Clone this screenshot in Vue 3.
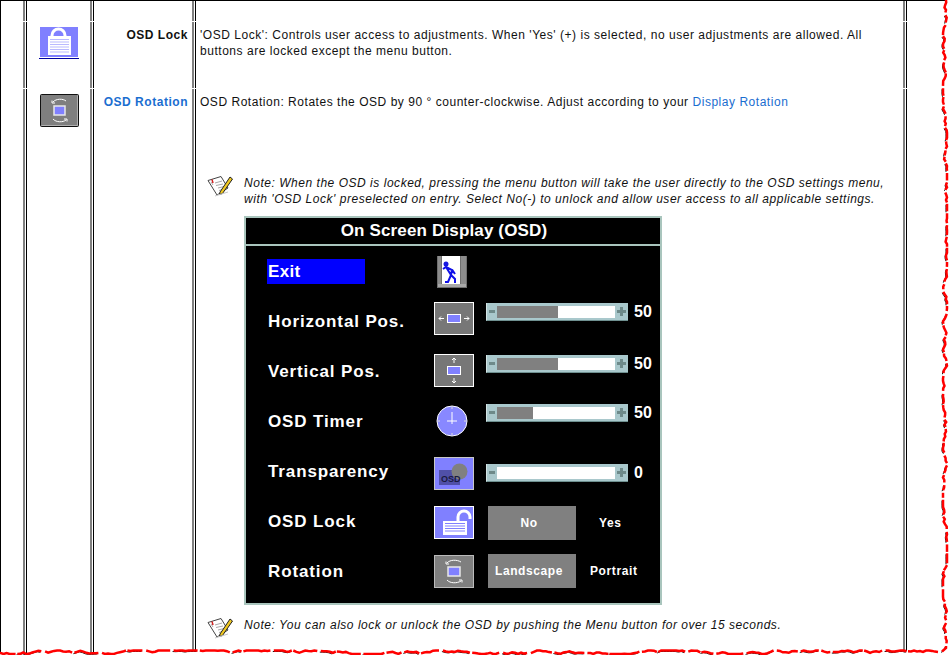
<script setup>
const rows = [
  { label: 'Exit', icon: 'exit', top: 10, active: true },
  { label: 'Horizontal Pos.', icon: 'hpos', top: 6, sliderTop: 7, fill: 61, value: 50 },
  { label: 'Vertical Pos.', icon: 'vpos', top: 8, sliderTop: 9, fill: 61, value: 50 },
  { label: 'OSD Timer', icon: 'clock', top: 9, sliderTop: 8, fill: 36, value: 50 },
  { label: 'Transparency', icon: 'trans', top: 11, sliderTop: 18, fill: 0, value: 0 },
  { label: 'OSD Lock', icon: 'unlock', top: 10, optTop: 10, box: 'No', other: 'Yes', gap: 23 },
  { label: 'Rotation', icon: 'rot', top: 9, optTop: 8, box: 'Landscape', other: 'Portrait', gap: 14 }
]

let seed = 4711
const rnd = (a, b) => {
  seed = (seed * 16807) % 2147483647
  return a + (seed % 1000) / 1000 * (b - a)
}

const redSegs = []
const blackSegs = []
const addSeg = (pts) => {
  const d = 'M' + pts.map((p) => p[0].toFixed(1) + ' ' + p[1].toFixed(1)).join('L')
  redSegs.push(d)
  if (redSegs.length % 2 === 0) blackSegs.push(d)
}

const outline = []
let x = 946
let y = 0
while (y < 642) {
  const len = rnd(4, 13)
  const seg = []
  const end = y + len
  while (y < end) {
    seg.push([x, y])
    y += 2.5
    x = Math.min(947, Math.max(943, x + rnd(-1.8, 1.8)))
  }
  seg.push([x, y])
  outline.push(...seg)
  addSeg(seg)
  y += rnd(1, 3)
}
outline.push([946, 648], [942, 652])
addSeg([[946, 646], [946, 648], [942, 651.5]])
x = 938
y = 652
while (x > 0) {
  const len = rnd(8, 30)
  const seg = []
  const end = x - len
  while (x > end) {
    seg.push([x, y])
    x -= 3
    y = Math.min(654, Math.max(650.5, y + rnd(-1.6, 1.6)))
  }
  seg.push([x, y])
  outline.push(...seg)
  addSeg(seg)
  x -= rnd(1, 4)
}
const mask =
  'M949 0L' + outline.map((p) => p[0].toFixed(1) + ' ' + p[1].toFixed(1)).join('L') + 'L0 655L949 655Z'
</script>

<template>
  <div class="page">
    <div class="table">
      <div class="cell"></div><div class="cell"></div><div class="cell"></div><div class="cell"></div><div class="cell"></div>

      <div class="cell"></div>
      <div class="cell icon-cell">
        <svg class="lock-icon" width="40" height="33" viewBox="0 0 40 33">
          <rect x="1" y="0" width="38" height="30" fill="#8080ff" />
          <path d="M13 10V8.500a6.500 6.500 0 0 1 13 0V10" fill="none" stroke="#fff" stroke-width="3" />
          <rect x="9" y="9" width="23" height="19" fill="#fff" />
          <path d="M11 12.500H30M11 15H30M11 17.500H30M11 20H30M11 22.500H30M11 25H30" stroke="#b9b9ff" />
          <rect x="0" y="31" width="40" height="1" fill="#0000a0" />
        </svg>
      </div>
      <div class="cell label-cell">OSD Lock</div>
      <div class="cell text-cell">
        'OSD Lock': Controls user access to adjustments. When 'Yes' (+) is selected, no user adjustments are allowed. All<br />buttons are locked except the menu button.
      </div>
      <div class="cell"></div>

      <div class="cell"></div>
      <div class="cell icon-cell">
        <svg width="39" height="33" viewBox="0 0 39 33">
          <rect x="0.500" y="0.500" width="38" height="32" rx="1" fill="#7f7f7f" stroke="#111" />
          <path d="M1.500 31.500H37.500V1.500" fill="none" stroke="#b0b0b0" />
          <rect x="14" y="12" width="11" height="9" fill="#8080ff" stroke="#e8e8e8" stroke-width="1.500" />
          <path d="M13 8C16 4.500 23 4.500 26 7M12 6.500V9H15M13 25C16 28.500 23 28.500 26 26M27 27.500V25H24" fill="none" stroke="#fff" />
        </svg>
      </div>
      <div class="cell label-cell link">OSD Rotation</div>
      <div class="cell text-cell">
        <div>OSD Rotation: Rotates the OSD by 90 ° counter-clockwise. Adjust according to your <span class="link-text">Display Rotation</span></div>

        <div class="note first-note">
          <svg class="note-icon" width="26" height="22" viewBox="0 0 26 22">
            <path d="M1 5.500L14 1.500L21 13L10 20Z" fill="#fff" stroke="#444" />
            <path d="M4 7L6 10M8 8L15 6M9 10.500L16 9M11 13L17 11.500M12 15.500L17 14" stroke="#a8a8a8" />
            <path d="M5 4.500L6 8" stroke="#d02020" stroke-width="1.500" />
            <path d="M13 17L23 2L25.500 4L15.500 18.500L12.500 19.500Z" fill="#f0c820" stroke="#222" />
            <path d="M8 21L21 17" stroke="#c8c8c8" />
          </svg>
          <div class="note-text">Note: When the OSD is locked, pressing the menu button will take the user directly to the OSD settings menu,<br />with 'OSD Lock' preselected on entry. Select No(-) to unlock and allow user access to all applicable settings.</div>
        </div>

        <div class="osd">
          <div class="osd-title">On Screen Display (OSD)</div>
          <div v-for="row in rows" :key="row.label" class="osd-row">
            <div class="osd-label" :class="{ active: row.active }">{{ row.label }}</div>
            <div class="osd-icon" :style="{ marginTop: row.top + 'px' }">
              <svg v-if="row.icon === 'exit'" class="exit-svg" width="30" height="32" viewBox="0 0 30 32">
                <rect x="0" y="0" width="30" height="32" fill="#6f6f6f" />
                <path d="M1 0H4V28H1ZM24 0H29V28H24Z" fill="#8c8c8c" />
                <rect x="5" y="0" width="18" height="28" fill="#fff" />
                <rect x="1" y="28" width="28" height="3" fill="#a8a8a8" />
                <circle cx="9" cy="8" r="2.500" fill="#1818e0" />
                <path d="M6 13L9 11L15 14L14 19M15 13.500L18 18M9 11L14 19L11 26H8M14 19L18 23V27" fill="none" stroke="#1010e8" stroke-width="2" />
              </svg>
              <svg v-else-if="row.icon === 'hpos'" width="40" height="33" viewBox="0 0 40 33">
                <rect x="0.500" y="0.500" width="39" height="32" fill="#777" stroke="#fff" />
                <rect x="13.500" y="12.500" width="13" height="8" fill="#8080ff" stroke="#fff" />
                <path d="M10 16.500H5M7 14.500L5 16.500L7 18.500M30 16.500H35M33 14.500L35 16.500L33 18.500" fill="none" stroke="#fff" />
              </svg>
              <svg v-else-if="row.icon === 'vpos'" width="40" height="33" viewBox="0 0 40 33">
                <rect x="0.500" y="0.500" width="39" height="32" fill="#777" stroke="#fff" />
                <rect x="13.500" y="12.500" width="13" height="8" fill="#8080ff" stroke="#fff" />
                <path d="M20 9V4M18 6L20 4L22 6M20 24V29M18 27L20 29L22 27" fill="none" stroke="#fff" />
              </svg>
              <svg v-else-if="row.icon === 'clock'" class="clock-svg" width="32" height="32" viewBox="0 0 32 32">
                <circle cx="16" cy="16" r="15" fill="#8888ff" stroke="#fff" />
                <path d="M16 7V19M11 16H21" fill="none" stroke="#fff" />
                <path d="M16 2V4M16 28V30M2 16H4M28 16H30" stroke="#ddd" />
              </svg>
              <svg v-else-if="row.icon === 'trans'" width="40" height="33" viewBox="0 0 40 33">
                <rect x="0.500" y="0.500" width="39" height="32" fill="#8080ff" stroke="#c8c8c8" />
                <rect x="5" y="13" width="21" height="15" fill="#5050a8" />
                <circle cx="25.500" cy="14.500" r="8" fill="#808080" />
                <text x="7" y="25" class="svg-text">OSD</text>
              </svg>
              <svg v-else-if="row.icon === 'unlock'" width="40" height="33" viewBox="0 0 40 33">
                <rect x="0.500" y="0.500" width="39" height="32" fill="#8080ff" stroke="#fff" />
                <path d="M24 15V11a6 6 0 0 1 12 0V13" fill="none" stroke="#fff" stroke-width="3" />
                <rect x="9" y="15" width="24" height="14" fill="#fff" />
                <path d="M11 17.500H31M11 20H31M11 22.500H31M11 25H31" stroke="#8080ff" />
              </svg>
              <svg v-else width="40" height="33" viewBox="0 0 40 33">
                <rect x="0.500" y="0.500" width="39" height="32" fill="#7f7f7f" stroke="#bbb" />
                <rect x="14" y="12" width="12" height="9" fill="#8080ff" stroke="#e8e8e8" stroke-width="1.500" />
                <path d="M13 8C16 4.500 23 4.500 27 7M12 6.500V9H15M13 25C16 28.500 23 28.500 27 26M28 27.500V25H25" fill="none" stroke="#fff" />
              </svg>
            </div>
            <div v-if="row.sliderTop" class="slider-wrap" :style="{ marginTop: row.sliderTop + 'px' }">
              <div class="slider">
                <span class="minus"></span>
                <div class="track"><div class="fill" :style="{ width: row.fill + 'px' }"></div></div>
                <span class="plus"></span>
              </div>
              <span class="value">{{ row.value }}</span>
            </div>
            <div v-else-if="row.box" class="options" :style="{ marginTop: row.optTop + 'px' }">
              <div class="opt-box">{{ row.box }}</div>
              <span class="opt-other" :style="{ marginLeft: row.gap + 'px' }">{{ row.other }}</span>
            </div>
          </div>
        </div>

        <div class="note second-note">
          <svg class="note-icon" width="26" height="22" viewBox="0 0 26 22">
            <path d="M1 5.500L14 1.500L21 13L10 20Z" fill="#fff" stroke="#444" />
            <path d="M4 7L6 10M8 8L15 6M9 10.500L16 9M11 13L17 11.500M12 15.500L17 14" stroke="#a8a8a8" />
            <path d="M5 4.500L6 8" stroke="#d02020" stroke-width="1.500" />
            <path d="M13 17L23 2L25.500 4L15.500 18.500L12.500 19.500Z" fill="#f0c820" stroke="#222" />
            <path d="M8 21L21 17" stroke="#c8c8c8" />
          </svg>
          <div class="note-text">Note: You can also lock or unlock the OSD by pushing the Menu button for over 15 seconds.</div>
        </div>
      </div>
      <div class="cell"></div>
    </div>

    <svg class="torn" width="949" height="655" viewBox="0 0 949 655">
      <path :d="mask" fill="#fff" />
      <g fill="none" stroke="#111" stroke-width="1" transform="translate(-1 1)">
        <path v-for="(d, i) in blackSegs" :key="'b' + i" :d="d" />
      </g>
      <g fill="none" stroke="#ff0000" stroke-width="2.500">
        <path v-for="(d, i) in redSegs" :key="'r' + i" :d="d" />
      </g>
    </svg>
  </div>
</template>

<style scoped>
.page {
  position: relative;
  width: 949px;
  height: 655px;
  overflow: hidden;
  background: #fff;
  font-family: "Liberation Sans", Arial, sans-serif;
  font-size: 12px;
  letter-spacing: 0.53px;
  color: #111;
}
.table {
  display: grid;
  grid-template-columns: 22px 67px 102px 711px 43px;
  grid-template-rows: 20px 66px 700px;
  row-gap: 1px;
  border-top: 1px solid #000;
  border-left: 1px solid #000;
  box-sizing: border-box;
  height: 655px;
}
.cell {
  min-width: 0;
}
.cell + .cell {
  border-left: 2px solid #808080;
  box-shadow: inset 1px 0 0 #fff, inset 2px 0 0 #000;
}
.table > .cell:nth-child(5n + 1) {
  border-left: 0;
  box-shadow: none;
}
.icon-cell {
  display: flex;
  justify-content: center;
  padding: 5px 0 0 3px;
  box-sizing: border-box;
}
.lock-icon {
  display: block;
}
.label-cell {
  font-weight: 700;
  text-align: right;
  padding: 5px 4px 0 0;
  line-height: 16px;
  box-sizing: border-box;
}
.link,
.link-text {
  color: #1a6ed0;
}
.text-cell {
  padding: 5px 0 0 6px;
  line-height: 16px;
  box-sizing: border-box;
}
.note {
  display: flex;
  padding-left: 7px;
  font-style: italic;
}
.note-icon {
  display: block;
  flex: none;
  width: 26px;
  margin-right: 11px;
}
.first-note {
  margin-top: 65px;
}
.second-note {
  margin-top: 12px;
}
.osd {
  width: 414px;
  margin: 9px 0 0 44px;
  border: 2px solid #a9c5bd;
  background: #000;
  color: #fff;
  padding-bottom: 7px;
  letter-spacing: 0;
  font-weight: 700;
}
.osd-title {
  height: 26px;
  line-height: 26px;
  padding-right: 18px;
  border-bottom: 2px solid #a9c5bd;
  text-align: center;
  font-size: 17px;
  letter-spacing: 0.15px;
}
.osd-row {
  display: flex;
  align-items: flex-start;
  height: 50px;
  padding-left: 21px;
}
.osd-label {
  flex: none;
  width: 167px;
  height: 25px;
  margin-top: 13px;
  padding-left: 1px;
  box-sizing: border-box;
  font-size: 17px;
  line-height: 25px;
  letter-spacing: 0.87px;
}
.osd-label.active {
  background: linear-gradient(#0000ff, #0000ff) no-repeat 0 0 / 98px 25px;
  letter-spacing: 0.3px;
}
.osd-icon {
  flex: none;
  width: 40px;
  margin-right: 12px;
}
.osd-icon svg {
  display: block;
}
.exit-svg {
  margin-left: 3px;
}
.clock-svg {
  margin-left: 2px;
}
.svg-text {
  font-family: "Liberation Sans", Arial, sans-serif;
  font-size: 9px;
  font-weight: 700;
  fill: #1a1a40;
}
.slider-wrap {
  display: flex;
  align-items: center;
}
.slider {
  display: flex;
  align-items: center;
  width: 142px;
  height: 18px;
  padding: 3px 0;
  box-sizing: border-box;
  background: #a9c8cc;
  border-left: 1px solid #d4e4e4;
  border-bottom: 1px solid #6f9090;
}
.track {
  width: 118px;
  height: 12px;
  background: #fff;
}
.fill {
  height: 100%;
  background: #808080;
}
.minus {
  width: 6px;
  height: 3px;
  margin: 0 2px 0 2px;
  background: #6e8a8a;
}
.plus {
  position: relative;
  width: 9px;
  height: 9px;
  margin-left: 2px;
  background: linear-gradient(#6e8a8a, #6e8a8a) center / 9px 3px no-repeat, linear-gradient(#6e8a8a, #6e8a8a) center / 3px 9px no-repeat;
}
.value {
  margin-left: 6px;
  font-size: 16px;
}
.options {
  display: flex;
  align-items: center;
  margin-left: 2px;
  font-size: 12px;
  letter-spacing: 0.6px;
}
.opt-box {
  width: 88px;
  height: 34px;
  padding-right: 6px;
  box-sizing: border-box;
  line-height: 34px;
  text-align: center;
  background: #808080;
}
.torn {
  position: absolute;
  left: 0;
  top: 0;
}
</style>
